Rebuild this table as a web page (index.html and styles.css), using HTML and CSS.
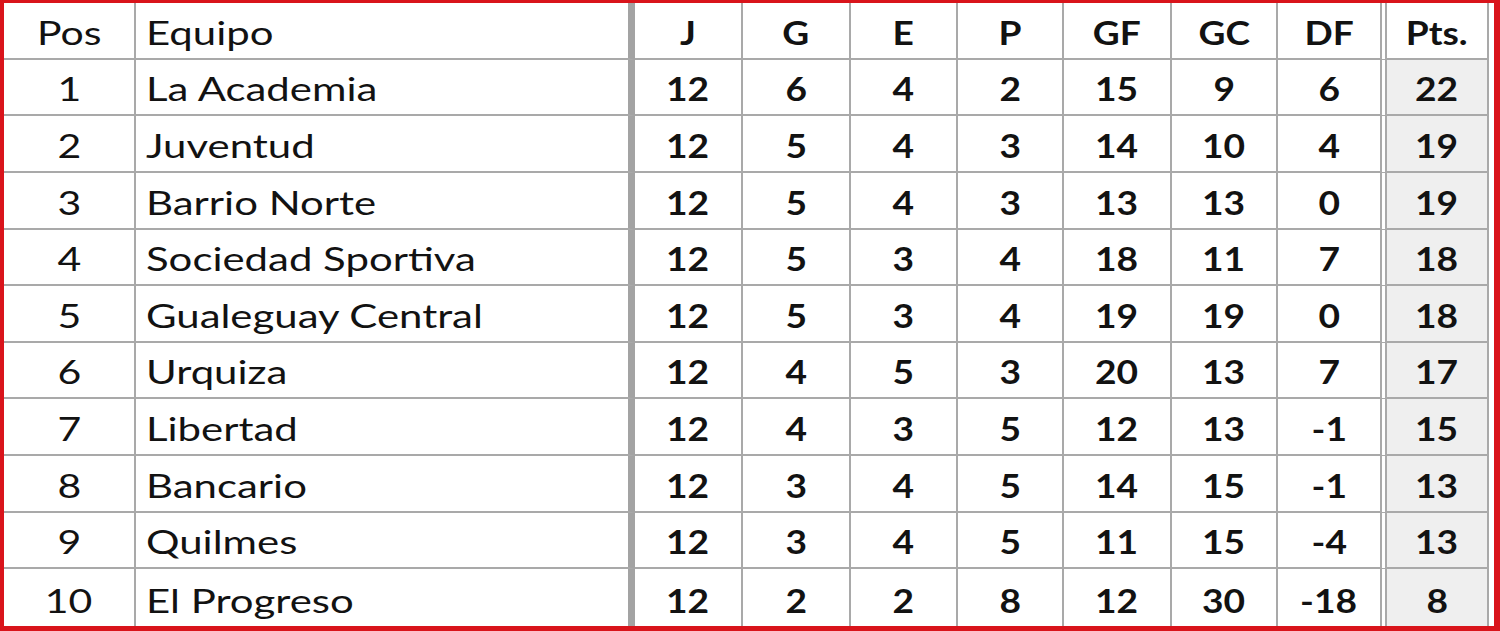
FILE: index.html
```html
<!DOCTYPE html>
<html lang="es">
<head>
<meta charset="utf-8">
<title>Tabla de posiciones</title>
<link rel="stylesheet" href="styles.css">
</head>
<body>
<div class="frame">
  <div class="table">
    <div class="cell c-pos"><span>Pos</span></div><div class="cell c-team"><span>Equipo</span></div><div class="cell b"><span>J</span></div><div class="cell b"><span>G</span></div><div class="cell b"><span>E</span></div><div class="cell b"><span>P</span></div><div class="cell b"><span>GF</span></div><div class="cell b"><span>GC</span></div><div class="cell b c-df"><span>DF</span></div><div class="cell b c-pts head"><span>Pts.</span></div>

    <div class="cell c-pos"><span>1</span></div><div class="cell c-team"><span>La Academia</span></div><div class="cell b"><span>12</span></div><div class="cell b"><span>6</span></div><div class="cell b"><span>4</span></div><div class="cell b"><span>2</span></div><div class="cell b"><span>15</span></div><div class="cell b"><span>9</span></div><div class="cell b c-df"><span>6</span></div><div class="cell b c-pts"><span>22</span></div>

    <div class="cell c-pos"><span>2</span></div><div class="cell c-team"><span>Juventud</span></div><div class="cell b"><span>12</span></div><div class="cell b"><span>5</span></div><div class="cell b"><span>4</span></div><div class="cell b"><span>3</span></div><div class="cell b"><span>14</span></div><div class="cell b"><span>10</span></div><div class="cell b c-df"><span>4</span></div><div class="cell b c-pts"><span>19</span></div>

    <div class="cell c-pos"><span>3</span></div><div class="cell c-team"><span>Barrio Norte</span></div><div class="cell b"><span>12</span></div><div class="cell b"><span>5</span></div><div class="cell b"><span>4</span></div><div class="cell b"><span>3</span></div><div class="cell b"><span>13</span></div><div class="cell b"><span>13</span></div><div class="cell b c-df"><span>0</span></div><div class="cell b c-pts"><span>19</span></div>

    <div class="cell c-pos"><span>4</span></div><div class="cell c-team"><span>Sociedad Sportiva</span></div><div class="cell b"><span>12</span></div><div class="cell b"><span>5</span></div><div class="cell b"><span>3</span></div><div class="cell b"><span>4</span></div><div class="cell b"><span>18</span></div><div class="cell b"><span>11</span></div><div class="cell b c-df"><span>7</span></div><div class="cell b c-pts"><span>18</span></div>

    <div class="cell c-pos"><span>5</span></div><div class="cell c-team"><span>Gualeguay Central</span></div><div class="cell b"><span>12</span></div><div class="cell b"><span>5</span></div><div class="cell b"><span>3</span></div><div class="cell b"><span>4</span></div><div class="cell b"><span>19</span></div><div class="cell b"><span>19</span></div><div class="cell b c-df"><span>0</span></div><div class="cell b c-pts"><span>18</span></div>

    <div class="cell c-pos"><span>6</span></div><div class="cell c-team"><span>Urquiza</span></div><div class="cell b"><span>12</span></div><div class="cell b"><span>4</span></div><div class="cell b"><span>5</span></div><div class="cell b"><span>3</span></div><div class="cell b"><span>20</span></div><div class="cell b"><span>13</span></div><div class="cell b c-df"><span>7</span></div><div class="cell b c-pts"><span>17</span></div>

    <div class="cell c-pos"><span>7</span></div><div class="cell c-team"><span>Libertad</span></div><div class="cell b"><span>12</span></div><div class="cell b"><span>4</span></div><div class="cell b"><span>3</span></div><div class="cell b"><span>5</span></div><div class="cell b"><span>12</span></div><div class="cell b"><span>13</span></div><div class="cell b c-df"><span>-1</span></div><div class="cell b c-pts"><span>15</span></div>

    <div class="cell c-pos"><span>8</span></div><div class="cell c-team"><span>Bancario</span></div><div class="cell b"><span>12</span></div><div class="cell b"><span>3</span></div><div class="cell b"><span>4</span></div><div class="cell b"><span>5</span></div><div class="cell b"><span>14</span></div><div class="cell b"><span>15</span></div><div class="cell b c-df"><span>-1</span></div><div class="cell b c-pts"><span>13</span></div>

    <div class="cell c-pos"><span>9</span></div><div class="cell c-team"><span>Quilmes</span></div><div class="cell b"><span>12</span></div><div class="cell b"><span>3</span></div><div class="cell b"><span>4</span></div><div class="cell b"><span>5</span></div><div class="cell b"><span>11</span></div><div class="cell b"><span>15</span></div><div class="cell b c-df"><span>-4</span></div><div class="cell b c-pts"><span>13</span></div>

    <div class="cell c-pos last"><span>10</span></div><div class="cell c-team last"><span>El Progreso</span></div><div class="cell b last"><span>12</span></div><div class="cell b last"><span>2</span></div><div class="cell b last"><span>2</span></div><div class="cell b last"><span>8</span></div><div class="cell b last"><span>12</span></div><div class="cell b last"><span>30</span></div><div class="cell b c-df last"><span>-18</span></div><div class="cell b c-pts last"><span>8</span></div>
  </div>
</div>
</body>
</html>
```
FILE: styles.css
```css
html, body {
  margin: 0;
  padding: 0;
  background: #ffffff;
}

.frame {
  box-sizing: border-box;
  width: 1500px;
  height: 631px;
  border-style: solid;
  border-color: #d9141b;
  border-width: 3px 6px 5px 4px;
  padding-right: 5px;
  background: #ffffff;
}

.table {
  display: grid;
  grid-template-columns: 132px 499px 108px 108px 107px 106px 108px 106px 109px 102px;
  grid-template-rows: repeat(11, 1fr);
  height: 623px;
  font-family: Lato, "Liberation Sans", sans-serif;
  font-size: 32px;
  color: #121212;
}

.cell {
  box-sizing: border-box;
  display: flex;
  align-items: flex-end;
  justify-content: center;
  padding-bottom: 9px;
  border-right: 2px solid #a9a9a9;
  border-bottom: 2px solid #a9a9a9;
  line-height: 1;
  white-space: nowrap;
}

.cell span {
  display: inline-block;
  transform: scaleX(1.28);
  transform-origin: center bottom;
}

.cell.last {
  border-bottom: none;
}

.c-team {
  justify-content: flex-start;
  padding-left: 10px;
  border-right: 7px solid #a3a3a3;
}

.c-team span {
  transform: scaleX(1.31);
  transform-origin: left bottom;
}

.b {
  font-weight: 700;
}

.b span {
  transform: scaleX(1.16);
}

.c-df {
  border-right: 7px double #a9a9a9;
}

.c-pts {
  background: #efefef;
}

.c-pts.head {
  background: #ffffff;
}
```
